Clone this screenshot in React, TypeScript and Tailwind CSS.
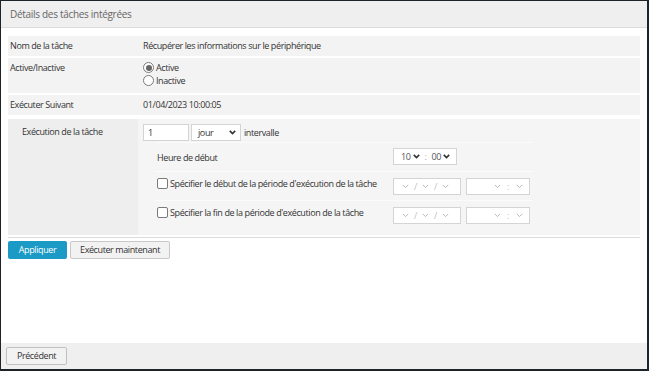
import React from "react";

const font = { fontFamily: '"Open Sans", "Noto Sans", sans-serif' };

function Chev({ light }: { light?: boolean }) {
  return (
    <svg width="7" height="5" viewBox="0 0 7 5" className="shrink-0">
      <path
        d="M0.8 0.9 L3.5 3.6 L6.2 0.9"
        fill="none"
        stroke={light ? "#b8b8b8" : "#333"}
        strokeWidth={light ? 1 : 1.6}
      />
    </svg>
  );
}

function Box({ className, children }: { className: string; children: React.ReactNode }) {
  return (
    <div className={`h-[17px] bg-white border border-[#d4d4d4] flex items-center ${className}`}>
      {children}
    </div>
  );
}

function Checkbox() {
  return <span className="w-[11px] h-[11px] border border-[#7a7a7a] rounded-[2px] bg-white shrink-0" />;
}

function DateTime() {
  return (
    <div className="flex gap-[5px]">
      <Box className="w-[68px] pl-[8px] gap-[5px] text-[#c0c0c0]">
        <Chev light />
        <span>/</span>
        <Chev light />
        <span>/</span>
        <Chev light />
      </Box>
      <Box className="w-[64px] pl-[27px] pr-[6px] gap-[6px] text-[#c0c0c0]">
        <Chev light />
        <span>:</span>
        <span className="ml-auto flex"><Chev light /></span>
      </Box>
    </div>
  );
}

export default function App() {
  return (
    <div
      style={font}
      className="w-[649px] h-[371px] flex flex-col bg-white border-l border-t border-r-2 border-b-2 border-[#1c2329] text-[9px] tracking-[-0.4px] text-[#333] overflow-hidden"
    >
      <div className="h-[27px] shrink-0 bg-[#efefef] border-b border-[#dcdcdc] flex items-center px-[9px] text-[10px] tracking-[-0.3px] text-[#666]">
        Détails des tâches intégrées
      </div>

      <div className="flex-1 px-[7px] pt-[8px] flex flex-col">
        <div className="flex flex-col gap-[2px]">
          <div className="h-[20px] bg-[#f3f3f3] flex items-center">
            <div className="w-[135px] pl-[2px]">Nom de la tâche</div>
            <div>Récupérer les informations sur le périphérique</div>
          </div>
          <div className="h-[35px] bg-[#f3f3f3] flex pt-[3px]">
            <div className="w-[135px] pl-[2px] leading-[13px]">Active/Inactive</div>
            <div className="flex flex-col leading-[13px]">
              <label className="flex items-center gap-[2px]">
                <span className="w-[11px] h-[11px] rounded-full border border-[#7a7a7a] bg-white flex items-center justify-center">
                  <span className="w-[6px] h-[6px] rounded-full bg-[#666]" />
                </span>
                Active
              </label>
              <label className="flex items-center gap-[2px]">
                <span className="w-[11px] h-[11px] rounded-full border border-[#7a7a7a] bg-white" />
                Inactive
              </label>
            </div>
          </div>
          <div className="h-[20px] bg-[#f3f3f3] flex items-center">
            <div className="w-[135px] pl-[2px]">Exécuter Suivant</div>
            <div>01/04/2023 10:00:05</div>
          </div>
        </div>

        <div className="mt-[4px] h-[116px] flex">
          <div className="w-[130px] bg-[#eeeeee] pl-[14px] pt-[6px]">Exécution de la tâche</div>
          <div className="flex-1 bg-[#f5f5f5] pl-[5px] pt-[5px]">
            <div className="flex items-center">
              <Box className="w-[46px] pl-[4px]">1</Box>
              <Box className="w-[50px] ml-[2px] pl-[6px] pr-[4px] justify-between">
                <span>jour</span>
                <Chev />
              </Box>
              <span className="ml-[3px]">intervalle</span>
            </div>
            <div className="ml-[12px] w-[378px] mt-[1px] flex flex-col">
              <div className="h-[29px] border-t border-[#fbfbfb] flex pt-[5px]">
                <div className="w-[238px] pl-[2px] pt-[3px]">Heure de début</div>
                <Box className="w-[64px] pl-[7px] gap-[2px] text-[#555]">
                  <span>10</span>
                  <Chev />
                  <span className="mx-[3px] text-[#aaa]">:</span>
                  <span>00</span>
                  <Chev />
                </Box>
              </div>
              <div className="h-[29px] border-t border-[#fbfbfb] flex pt-[6px]">
                <div className="w-[238px] pl-[2px] flex items-start gap-[2px] whitespace-nowrap">
                  <Checkbox />
                  <span className="leading-[11px]">Spécifier le début de la période d'exécution de la tâche</span>
                </div>
                <DateTime />
              </div>
              <div className="h-[29px] border-t border-[#fbfbfb] flex pt-[6px]">
                <div className="w-[238px] pl-[2px] flex items-start gap-[2px] whitespace-nowrap">
                  <Checkbox />
                  <span className="leading-[11px]">Spécifier la fin de la période d'exécution de la tâche</span>
                </div>
                <DateTime />
              </div>
            </div>
          </div>
        </div>

        <div className="mt-[2px] border-t border-[#dcdcdc] pt-[3px] flex gap-[3px]">
          <button className="h-[18px] w-[59px] rounded-[2px] bg-[#1a9ac4] text-white text-[9px]">
            Appliquer
          </button>
          <button className="h-[18px] w-[100px] rounded-[2px] bg-[#f2f2f2] border border-[#c8c8c8] text-[9px]">
            Exécuter maintenant
          </button>
        </div>
      </div>

      <div className="h-[26px] shrink-0 bg-[#efefef] flex items-center px-[5px]">
        <button className="h-[18px] w-[61px] rounded-[2px] bg-[#f2f2f2] border border-[#c0c0c0] text-[9px]">
          Précédent
        </button>
      </div>
    </div>
  );
}
